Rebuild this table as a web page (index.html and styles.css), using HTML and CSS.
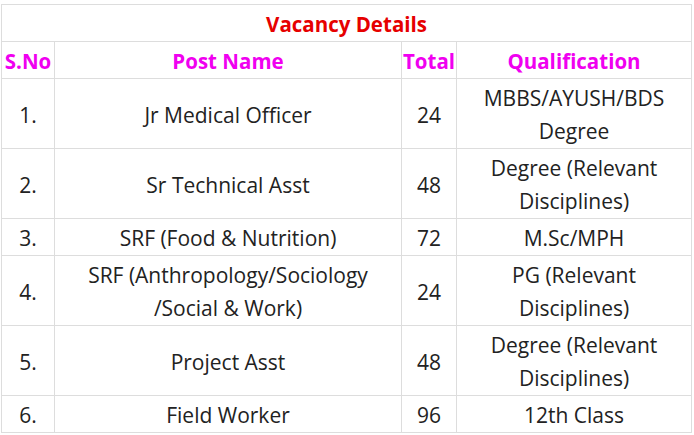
FILE: index.html
```html
<!DOCTYPE html>
<html>
<head>
<meta charset="utf-8">
<link rel="stylesheet" href="styles.css">
</head>
<body>
<table class="vacancy">
  <colgroup>
    <col class="c-sno">
    <col class="c-post">
    <col class="c-total">
    <col class="c-qual">
  </colgroup>
  <thead>
    <tr><th colspan="4" class="title">Vacancy Details</th></tr>
    <tr class="head">
      <th>S.No</th>
      <th>Post Name</th>
      <th>Total</th>
      <th>Qualification</th>
    </tr>
  </thead>
  <tbody>
    <tr><td>1.</td><td>Jr Medical Officer</td><td>24</td><td>MBBS/AYUSH/BDS Degree</td></tr>
    <tr><td>2.</td><td>Sr Technical Asst</td><td>48</td><td>Degree (Relevant Disciplines)</td></tr>
    <tr><td>3.</td><td>SRF (Food &amp; Nutrition)</td><td>72</td><td>M.Sc/MPH</td></tr>
    <tr><td>4.</td><td>SRF (Anthropology/Sociology /Social &amp; Work)</td><td>24</td><td>PG (Relevant Disciplines)</td></tr>
    <tr><td>5.</td><td>Project Asst</td><td>48</td><td>Degree (Relevant Disciplines)</td></tr>
    <tr><td>6.</td><td>Field Worker</td><td>96</td><td>12th Class</td></tr>
  </tbody>
</table>
</body>
</html>
```
FILE: styles.css
```css
html, body {
  margin: 0;
  padding: 0;
  background: #fff;
}
body {
  padding: 4px 0 0 1px;
  font-family: "Open Sans", "Noto Sans", sans-serif;
  color: #222;
}
.vacancy {
  border-collapse: collapse;
  table-layout: fixed;
  width: 690px;
  font-size: 21px;
  line-height: 33px;
}
.c-sno { width: 53px; }
.c-post { width: 347px; }
.c-total { width: 55px; }
.c-qual { width: 235px; }
.vacancy th,
.vacancy td {
  border: 1px solid #ddd;
  padding: 3px 1px 0;
  text-align: center;
  vertical-align: middle;
}
.vacancy th {
  font-weight: 700;
  font-size: 20.5px;
  color: #f000f0;
}
.vacancy th.title {
  color: #e60000;
}
```
